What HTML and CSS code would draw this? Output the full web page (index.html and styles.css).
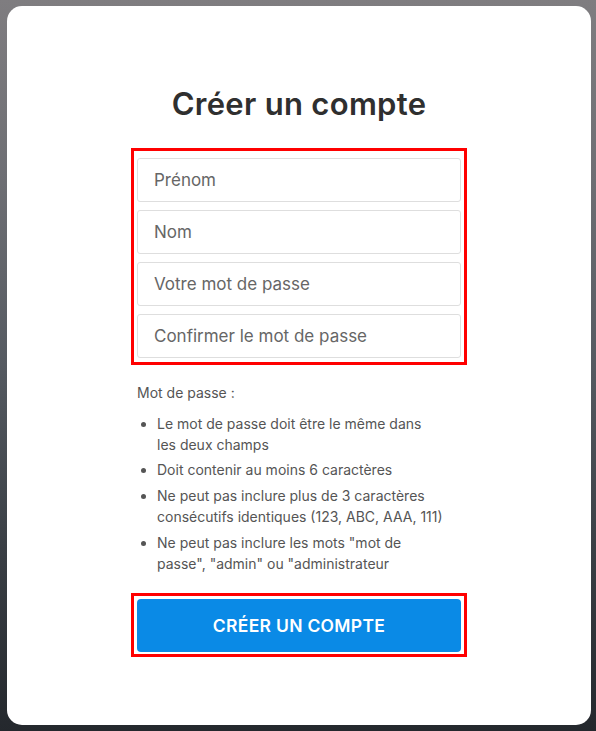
FILE: index.html
```html
<!DOCTYPE html>
<html lang="fr">

<head>
    <meta charset="UTF-8">
    <meta name="viewport" content="width=device-width, initial-scale=1">
    <title>Créer un compte</title>
    <link rel="stylesheet" href="styles.css">
</head>

<body>
    <!-- card -->
    <div class="card">
        <h1 class="title">Créer un compte</h1>

        <!-- fields -->
        <form class="fields-box">
            <input class="field" type="text" placeholder="Prénom">
            <input class="field" type="text" placeholder="Nom">
            <input class="field" type="password" placeholder="Votre mot de passe">
            <input class="field" type="password" placeholder="Confirmer le mot de passe">
        </form>

        <!-- password rules -->
        <div class="rules">
            <p class="rules-label">Mot de passe :</p>
            <ul class="rules-list">
                <li>Le mot de passe doit être le même dans les deux champs</li>
                <li>Doit contenir au moins 6 caractères</li>
                <li>Ne peut pas inclure plus de 3 caractères consécutifs identiques (123, ABC, AAA, 111)</li>
                <li>Ne peut pas inclure les mots "mot de passe", "admin" ou "administrateur</li>
            </ul>
        </div>

        <!-- submit -->
        <div class="button-box">
            <button class="button" type="button">Créer un compte</button>
        </div>
    </div>
</body>

</html>
```

FILE: styles.css
```css
* {
    box-sizing: border-box;
    font-family: 'Inter', 'Noto Sans', sans-serif;
}

body {
    margin: 0px;
    height: 731px;
    overflow: hidden;
    background: linear-gradient(180deg, #7f7d80 0%, #6d6e73 25%, #555a61 50%, #3a3f45 75%, #24282d 100%);
}

.card {
    display: flex;
    flex-direction: column;
    align-items: center;
    width: 584px;
    height: 719px;
    margin: 6px 0 0 7px;
    padding-top: 77px;
    background-color: white;
    border-radius: 15px;
}

.title {
    margin: 0 0 23px 0;
    font-size: 31px;
    line-height: 42px;
    font-weight: 600;
    letter-spacing: 0.3px;
    color: #2f2f2f;
}

.fields-box {
    display: flex;
    flex-direction: column;
    gap: 8px;
    width: 336px;
    padding: 7px 3px 4px 3px;
    border: 3px solid red;
}

.field {
    height: 44px;
    padding: 0 16px;
    border: 1px solid #dedede;
    border-radius: 3px;
    font-size: 17px;
    color: #333;
    outline: none;
}

.field::placeholder {
    color: #666;
}

.rules {
    width: 324px;
    margin-top: 18px;
    font-size: 14px;
    line-height: 20.8px;
    color: #555;
}

.rules-label {
    margin: 0 0 10px 0;
}

.rules-list {
    margin: 0;
    padding: 0 18px 0 20px;
}

.rules-list li {
    margin-bottom: 5px;
}

.button-box {
    width: 336px;
    margin-top: 14px;
    padding: 3px 3px 2px 3px;
    border: 3px solid red;
}

.button {
    display: block;
    width: 100%;
    height: 53px;
    border: none;
    border-radius: 4px;
    background-color: #0a8ae6;
    color: white;
    font-size: 17.5px;
    font-weight: 600;
    text-transform: uppercase;
    letter-spacing: 0.3px;
}
```
